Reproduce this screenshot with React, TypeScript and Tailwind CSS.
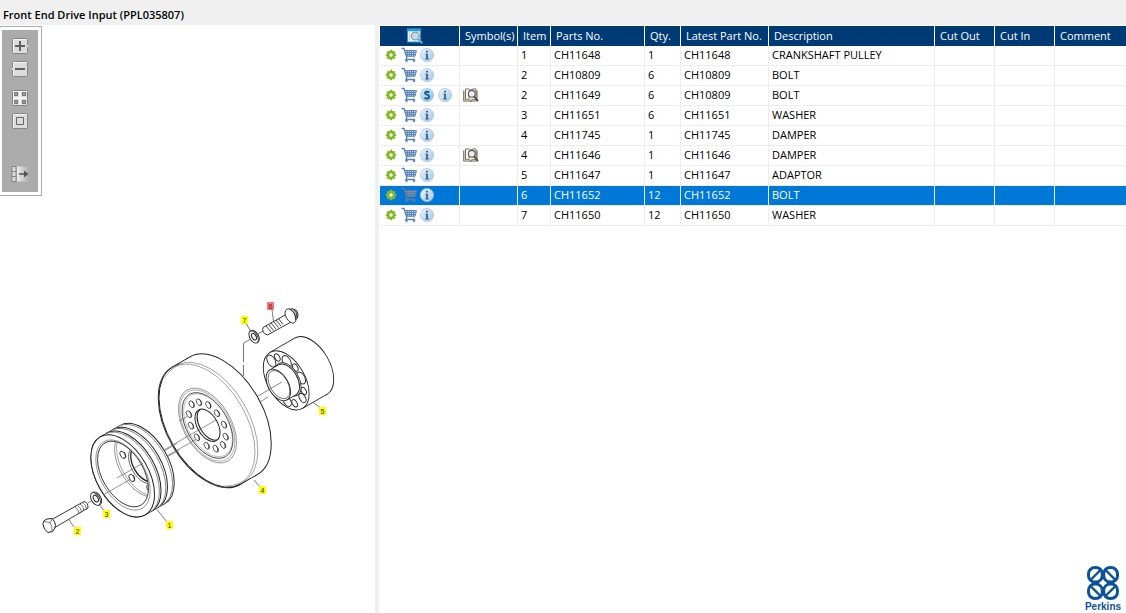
import React from "react";

type Part = {
  item: string;
  part: string;
  qty: string;
  latest: string;
  description: string;
  superseded?: boolean;
  book?: boolean;
  selected?: boolean;
};

const parts: Part[] = [
  { item: "1", part: "CH11648", qty: "1", latest: "CH11648", description: "CRANKSHAFT PULLEY" },
  { item: "2", part: "CH10809", qty: "6", latest: "CH10809", description: "BOLT" },
  { item: "2", part: "CH11649", qty: "6", latest: "CH10809", description: "BOLT", superseded: true, book: true },
  { item: "3", part: "CH11651", qty: "6", latest: "CH11651", description: "WASHER" },
  { item: "4", part: "CH11745", qty: "1", latest: "CH11745", description: "DAMPER" },
  { item: "4", part: "CH11646", qty: "1", latest: "CH11646", description: "DAMPER", book: true },
  { item: "5", part: "CH11647", qty: "1", latest: "CH11647", description: "ADAPTOR" },
  { item: "6", part: "CH11652", qty: "12", latest: "CH11652", description: "BOLT", selected: true },
  { item: "7", part: "CH11650", qty: "12", latest: "CH11650", description: "WASHER" },
];

const headings = ["Symbol(s)", "Item", "Parts No.", "Qty.", "Latest Part No.", "Description", "Cut Out", "Cut In", "Comment"];

function GearIcon() {
  return (
    <svg viewBox="0 0 12 12" className="size-3">
      <g stroke="#8abf2b" strokeWidth="2.4">
        <path d="M6 .8V11.200M.8 6H11.200M2.300 2.300l7.400 7.400M9.700 2.300L2.300 9.700" />
      </g>
      <circle cx="6" cy="6" r="3.900" fill="#80b82a" />
      <circle cx="6" cy="6" r="1.700" fill="#fff" />
    </svg>
  );
}

function CartIcon({ muted }: { muted?: boolean }) {
  const c = muted ? "#64799a" : "#5b83b3";
  return (
    <svg viewBox="0 0 16 16" className="size-4" fill="none">
      <path d="M3.500 3.500H15.500L14 9.500 5.500 10z" fill={muted ? "#6d9bd0" : "#b5cce6"} />
      <path d="M.5 1.500H3L5.800 10.500 5 12.500H14" stroke={c} strokeWidth="1.300" />
      <path d="M3.500 3.500H15.500L14 9.300H5.300M4.300 5.500H15M5 7.500H14.500M6.500 3.500V9M8.500 3.500V9M10.500 3.500V9M12.500 3.500V9" stroke={c} strokeWidth=".9" />
      <circle cx="5.500" cy="13.800" r="1.200" fill={c} />
      <circle cx="13" cy="13.800" r="1.200" fill={c} />
    </svg>
  );
}

function Badge({ kind }: { kind: "i" | "s" }) {
  return (
    <svg viewBox="0 0 14 14" className="size-3.5">
      <defs>
        <linearGradient id={"badge-" + kind} x1="0" y1="0" x2="1" y2="1">
          <stop offset="0" stopColor={kind === "i" ? "#edf4fa" : "#d4eaf6"} />
          <stop offset="1" stopColor={kind === "i" ? "#a6c8e6" : "#86c0e2"} />
        </linearGradient>
      </defs>
      <circle cx="7" cy="7" r="6.600" fill={"url(#badge-" + kind + ")"} stroke="#a3c1da" strokeWidth=".7" />
      {kind === "i" ? (
        <path d="M6 2.800h2v1.700H6zM5.300 5.800H8v4.600h.9v1H5.200v-1h.9V6.800h-.8z" fill="#3568a5" />
      ) : (
        <path d="M9.300 4.400C7.800 3.300 4.900 3.500 5 5.200 5.200 7 9.200 6.500 9.200 8.800 9.100 10.900 6.200 10.900 4.600 9.700" fill="none" stroke="#0d5c94" strokeWidth="1.900" />
      )}
    </svg>
  );
}

function BookIcon() {
  return (
    <svg viewBox="0 0 16 14" className="h-3.5 w-4" fill="none">
      <path d="M.8 2.500V13H7.500L8 13.500 8.500 13H14V2.500" stroke="#6e6b50" strokeWidth="1.200" />
      <path d="M2.500 1C5 .6 6.500 1 7.800 2 9 1 11 .6 13 1V11.500C11 11.200 9 11.500 7.800 12.500 6.500 11.500 5 11.200 2.500 11.500z" fill="#f5f5f0" stroke="#77745f" />
      <path d="M6 2v9" stroke="#8d8a78" />
      <circle cx="8.800" cy="5.800" r="3.400" fill="#ededed" stroke="#555" strokeWidth="1.100" />
      <path d="M11 8.500L15 13" stroke="#444" strokeWidth="1.700" />
    </svg>
  );
}

function PreviewIcon() {
  return (
    <svg viewBox="0 0 16 16" className="size-4" fill="none">
      <rect x=".5" y="1" width="13" height="13" fill="#eaf5fb" stroke="#2b9bd8" />
      <path d="M.5 2H13.500" stroke="#2b9bd8" strokeWidth="2.500" />
      <path d="M2.500 5v8" stroke="#7ec3e8" strokeDasharray="1 1" />
      <circle cx="8.300" cy="8" r="3.900" fill="#c3dcec" stroke="#8f9aa3" strokeWidth="1.300" />
      <path d="M11.300 11L15.500 15.300" stroke="#5aa8d8" strokeWidth="2" />
    </svg>
  );
}

function ToolFrame({ children }: { children: React.ReactNode }) {
  return (
    <svg viewBox="0 0 18 16" className="h-4 w-[18px]" fill="none">
      <rect x="1.500" y=".5" width="15" height="15" rx="1" fill="#dcdcdc" stroke="#858585" />
      <path d="M2.500 14.500V1.500H15.500" stroke="#f5f5f5" />
      {children}
    </svg>
  );
}

function Toolbar() {
  return (
    <div className="mt-px w-[42px] border border-l-0 border-[#aaa] bg-white py-[3px] pr-[3px] pl-0.5">
      <div className="flex flex-col items-center bg-[#ababab] pt-2 pb-2.5">
        <button aria-label="Zoom in" className="mb-[7px]">
          <ToolFrame>
            <path d="M16 6l2 2-2 2z" fill="#eee" stroke="#999" strokeWidth=".5" />
            <path d="M9 3v10M4 8h10" stroke="#606060" strokeWidth="2" />
          </ToolFrame>
        </button>
        <button aria-label="Zoom out" className="mb-[13px]">
          <ToolFrame>
            <path d="M2 6L0 8l2 2z" fill="#eee" stroke="#999" strokeWidth=".5" />
            <path d="M4 8h10" stroke="#606060" strokeWidth="2" />
          </ToolFrame>
        </button>
        <button aria-label="Fit page" className="mb-[7px]">
          <ToolFrame>
            <path d="M9 1v14M2 8h14" stroke="#f3f3f3" strokeWidth="2" />
            <path d="M3.500 2.500h3v3h-3zM11.500 2.500h3v3h-3zM3.500 10.500h3v3h-3zM11.500 10.500h3v3h-3z" fill="#a0a0a0" stroke="#707070" />
          </ToolFrame>
        </button>
        <button aria-label="Actual size" className="mb-[37px]">
          <ToolFrame>
            <path d="M5.500 4.500h7v7h-7z" stroke="#666" />
          </ToolFrame>
        </button>
        <button aria-label="Show list">
          <svg viewBox="0 0 18 16" className="h-4 w-[18px]" fill="none">
            <defs>
              <linearGradient id="fade">
                <stop offset="0" stopColor="#eee" />
                <stop offset="1" stopColor="#ababab" />
              </linearGradient>
            </defs>
            <path d="M6 .5h12v15H6z" fill="url(#fade)" />
            <path d="M1 .5h4v15H1zM1 5.500h4M1 10.500h4" fill="#ddd" stroke="#858585" />
            <path d="M8 8h7" stroke="#555" strokeWidth="1.600" />
            <path d="M13 4.500L17.500 8 13 11.500z" fill="#555" />
          </svg>
        </button>
      </div>
    </div>
  );
}

type DiscProps = { x: number; y: number; r: number; fill?: string; stroke?: string; w?: number };

// A circle seen along the 30 degree axis of the exploded view.
function Disc({ x, y, r, fill = "none", stroke = "#222", w = 0.8 }: DiscProps) {
  return <ellipse cx={x} cy={y} rx={r} ry={r * 0.577} transform={`rotate(60 ${x} ${y})`} fill={fill} stroke={stroke} strokeWidth={w} />;
}

// A cylinder whose near face is at (x, y) and whose far face is at (x + dx, y - dy).
function Drum({ x, y, r, dx, w = 0.9 }: { x: number; y: number; r: number; dx: number; w?: number }) {
  const dy = dx * 0.577;
  const ax = r * 0.5;
  const ay = r * 0.866;
  return (
    <g>
      <Disc x={x + dx} y={y - dy} r={r} fill="#fff" w={w} />
      <path d={`M${x - ax} ${y - ay}L${x + dx - ax} ${y - dy - ay}L${x + dx + ax} ${y - dy + ay}L${x + ax} ${y + ay}z`} fill="#fff" />
      <path
        d={`M${x - ax} ${y - ay}L${x + dx - ax} ${y - dy - ay}M${x + dx + ax} ${y - dy + ay}L${x + ax} ${y + ay}`}
        stroke="#222"
        strokeWidth={w}
      />
      <Disc x={x} y={y} r={r} fill="#fff" w={w} />
    </g>
  );
}

function Callout({ x, y, n, active }: { x: number; y: number; n: string; active?: boolean }) {
  return (
    <g>
      <rect x={x - 3} y={y - 4} width="7" height="8" fill={active ? "#f07878" : "#ffff00"} />
      <text x={x + 0.5} y={y + 2.5} textAnchor="middle" fontSize="7" fill={active ? "#7a1010" : "#333"} fontFamily="Liberation Sans, sans-serif">
        {n}
      </text>
    </g>
  );
}

const damperHoles = [
  [199, 402.3], [208.3, 405], [217, 413.3], [224, 424.7], [225.7, 436.7], [223, 445],
  [215.7, 448.7], [206.7, 445.7], [197, 437.3], [191, 425.7], [189, 414.3], [191.7, 404.3],
];

const flangeHoles = [
  [271.3, 361, 6.5], [277.3, 357.5, 4], [286.7, 361.5, 6.5], [295.3, 367.5, 4],
  [301, 378, 6.5], [303.7, 391, 4], [302.5, 398, 5], [294.7, 403.3, 4], [287, 401, 6],
];

function Diagram() {
  return (
    <svg viewBox="40 296 300 244" className="mt-[100px] ml-10 h-[244px] w-[300px]" fill="none" role="img" aria-label="Exploded view of the front end drive input">
      <defs>
        <clipPath id="bore">
          <ellipse cx="123" cy="474" rx="36" ry="20.800" transform="rotate(60 123 474)" />
        </clipPath>
        <clipPath id="hub-bore">
          <ellipse cx="207.500" cy="425.300" rx="17.500" ry="10.100" transform="rotate(60 207.500 425.300)" />
        </clipPath>
        <clipPath id="flange">
          <ellipse cx="286.200" cy="380.400" rx="32" ry="18.500" transform="rotate(60 286.200 380.400)" />
        </clipPath>
      </defs>

      {/* adaptor */}
      <Drum x={286.2} y={380.4} r={32.4} dx={24.6} />
      <g clipPath="url(#flange)">
        {flangeHoles.map(([x, y, r], i) => (
          <Disc key={i} x={x} y={y} r={r} w={0.9} />
        ))}
        <Disc x={288} y={379.4} r={18.5} fill="#fff" />
      </g>
      <Drum x={278.3} y={385} r={17.3} dx={9} />
      <Disc x={279} y={384.6} r={15.5} stroke="#444" w={0.7} />
      <path d="M258 396L282 382M260 402L268 397" stroke="#555" strokeWidth=".7" />

      {/* damper */}
      <Drum x={206.2} y={425.8} r={67.8} dx={17.1} w={1} />
      <Disc x={210.5} y={423.5} r={67} fill="#fff" stroke="#777" w={0.6} />
      <Disc x={208} y={424.8} r={66.5} fill="#fff" stroke="#777" w={0.6} />
      <ellipse cx="205.500" cy="426.200" rx="65" ry="37.500" transform="rotate(60 205.500 426.200)" fill="#fff" />
      <path d="M172.300 367.100A67.800 39.100 60 0 0 240.100 484.500" stroke="#222" />
      <Disc x={207.5} y={425.5} r={41} stroke="#777" w={0.7} />
      <Disc x={207.3} y={425.5} r={39} stroke="#888" w={0.6} />
      <Disc x={207.5} y={425.5} r={36} stroke="#333" w={0.8} />
      <Disc x={208} y={425.2} r={34.5} stroke="#888" w={0.5} />
      {damperHoles.map(([x, y], i) => (
        <g key={i}>
          <Disc x={x} y={y} r={3.8} stroke="#444" w={0.8} />
          <path d={`M${x + 0.5} ${y - 3}q2.800 3 1.500 6`} stroke="#333" strokeWidth="1" />
        </g>
      ))}
      <Disc x={207.5} y={425.3} r={17.7} w={1} />
      <g clipPath="url(#hub-bore)">
        <Disc x={209.5} y={424.2} r={17.5} w={1.1} />
      </g>
      <path d="M163 450.500L216 420M166 456.500L196 439.500M179 421L188 416" stroke="#666" strokeWidth=".7" />

      {/* pulley */}
      <Drum x={122.7} y={475.9} r={45} dx={19.7} w={1} />
      <Disc x={140.7} y={465.4} r={45} fill="#fff" stroke="#777" />
      <Disc x={135.7} y={468.4} r={45} fill="#fff" w={1} />
      <Disc x={134} y={469.4} r={45} fill="#fff" stroke="#777" />
      <Disc x={129.2} y={472.2} r={45} fill="#fff" w={1} />
      <Disc x={127.6} y={473.1} r={45} fill="#fff" stroke="#777" />
      <Disc x={122.7} y={475.9} r={45} fill="#fff" w={1} />
      <Disc x={123} y={475} r={38.5} stroke="#777" w={0.7} />
      <Disc x={123} y={474} r={36} />
      <g clipPath="url(#bore)">
        <Disc x={140} y={464} r={36} stroke="#777" w={0.7} />
        <Disc x={142} y={463} r={36} stroke="#777" w={0.6} />
        <Disc x={143} y={465} r={20.5} stroke="#555" w={0.8} />
        <Disc x={144.5} y={464} r={19.5} w={1.3} />
        <Disc x={122.7} y={454.8} r={4} />
        <Disc x={131.7} y={478} r={4} />
        <Disc x={149.5} y={488.5} r={4} />
        <path d="M124 452q3 3 1 6M133 475q3 3 1 6" stroke="#333" />
      </g>
      <path d="M117 478L143 463M103 495L130 479.500" stroke="#666" strokeWidth=".7" />
      <path d="M164 451L177 443.500M167 457L179 450" stroke="#666" strokeWidth=".7" />

      {/* bolt 2 and washer 3 */}
      <path d="M50 520.500L84 501.500Q88 502 88 508L54 528z" fill="#fff" stroke="#222" strokeWidth=".9" />
      <path d="M75 507q4 2 4 7M77.500 505.500q4 2 4 7M80 504q4 2 4 7M82.500 502.500q4 2 4 7" stroke="#444" strokeWidth=".7" />
      <path d="M42.800 523.500Q43.500 520 47 519L52 518.500Q55.500 521.500 55.500 525.500 55 529 52.500 531.500L48 532.500Q43.500 530 42.800 523.500z" fill="#fff" stroke="#222" />
      <path d="M43.500 521.500L50 522.500 52.500 519M50 522.500Q52.500 526 52 531" stroke="#444" strokeWidth=".7" />
      <path d="M88 503L92 500.500" stroke="#666" strokeWidth=".7" />
      <Disc x={96.7} y={498.3} r={7} fill="#fff" w={0.9} />
      <Disc x={95.5} y={499} r={7} fill="#fff" w={0.9} />
      <Disc x={95.8} y={498.6} r={3.7} w={1} />

      {/* bolt 6 and washer 7 */}
      <path d="M243.500 376V365M243.500 362V343L250 339.500M258 334L263 331" stroke="#555" strokeWidth=".8" />
      <Disc x={254.6} y={336.3} r={6.7} fill="#fff" w={0.9} />
      <Disc x={253.6} y={337} r={6.7} fill="#fff" w={0.9} />
      <Disc x={254} y={336.7} r={3.5} w={1} />
      <path d="M263 327.500L286 314.500 291 322 267.500 335Q261.500 333 263 327.500z" fill="#fff" stroke="#222" strokeWidth=".9" />
      <path d="M266 326l5 6M268.500 324.500l5 6M271 323l5 6M273.500 321.500l5 6M276 320l5 6M278.500 318.500l4.500 6" stroke="#333" strokeWidth=".9" />
      <path d="M288 309.500Q293 307.500 296.500 310.500 299 314 297.500 318L294 321z" fill="#ddd" stroke="#222" />
      <Disc x={290.5} y={316} r={7.8} fill="#fff" />
      <path d="M291 309.500q5 4 4.500 10.500M293.500 309q4 3.500 3.500 9" stroke="#333" strokeWidth=".9" />

      {/* leaders */}
      <path d="M74 527L69 520M105 512L99 504M167 522L157 509.500M261 488L254 480M321 408L313 402.500M272 310L273.500 321M246.500 324L250.500 331" stroke="#444" strokeWidth=".7" />
      <Callout x={77} y={531} n="2" />
      <Callout x={106} y={514} n="3" />
      <Callout x={169} y={525} n="1" />
      <Callout x={262} y={490} n="4" />
      <Callout x={322} y={411} n="5" />
      <Callout x={244} y={320} n="7" />
      <Callout x={270} y={306} n="6" active />
    </svg>
  );
}

function PerkinsLogo() {
  return (
    <div className="flex w-10 flex-col items-center gap-px text-[#0b5299]">
      <svg viewBox="0 0 32 34" className="h-[34px] w-8" fill="none" stroke="currentColor" strokeWidth="3">
        <rect x="1.500" y="1.500" width="13.800" height="14.600" rx="6.500" />
        <rect x="16.700" y="1.500" width="13.800" height="14.600" rx="6.500" />
        <rect x="1.500" y="17.900" width="13.800" height="14.600" rx="6.500" />
        <rect x="16.700" y="17.900" width="13.800" height="14.600" rx="6.500" />
        <path d="M3.500 14L13 4.500M28.500 14L19 4.500M3.500 20L13 29.500M28.500 20L19 29.500" strokeWidth="2.400" />
        <path d="M16 13.500L19.500 17 16 20.500 12.500 17z" fill="#fff" stroke="none" />
      </svg>
      <span className="font-['Liberation_Sans',sans-serif] text-[10px] leading-3 font-bold">Perkins</span>
    </div>
  );
}

const headCell = "border-r border-white pl-[5px] text-left font-normal last:border-r-0";
const cell = "h-5 border-r border-b border-[#ededed] pt-0 pr-0 pb-px pl-[3px] last:border-r-0";

export default function App() {
  return (
    <div className="flex min-h-screen flex-col bg-white font-['Open_Sans','Noto_Sans',sans-serif] text-[11px] leading-4 text-black">
      <header className="h-[25px] bg-[#f0f0f0] pt-[7px] pl-[3px]">
        <h1 className="text-[11px] leading-4 font-semibold">Front End Drive Input (PPL035807)</h1>
      </header>
      <div className="flex flex-1">
        <section className="w-[375px] shrink-0">
          <Toolbar />
          <Diagram />
        </section>
        <div className="w-1 shrink-0 bg-[#f0f0f0]" />
        <main className="flex min-w-0 flex-1 flex-col justify-between pt-px pl-px">
          <table className="w-full table-fixed border-separate border-spacing-0">
            <colgroup>
              <col className="w-20" />
              <col className="w-[58px]" />
              <col className="w-[33px]" />
              <col className="w-[94px]" />
              <col className="w-9" />
              <col className="w-[88px]" />
              <col className="w-[166px]" />
              <col className="w-[60px]" />
              <col className="w-[60px]" />
              <col />
            </colgroup>
            <thead>
              <tr className="h-5 bg-[#003a75] whitespace-nowrap text-white">
                <th className="border-r border-white py-0 pr-0 pl-[27px]">
                  <button aria-label="Preview parts" className="block w-4">
                    <PreviewIcon />
                  </button>
                </th>
                {headings.map((h) => (
                  <th key={h} className={headCell}>{h}</th>
                ))}
              </tr>
            </thead>
            <tbody>
              {parts.map((p, i) => (
                <tr key={i} className={p.selected ? "bg-[#0078d7] text-white" : "bg-white"}>
                  <td className="h-5 border-r border-b border-[#ededed] pt-0 pr-0 pb-px pl-[5px]">
                    <div className="flex items-center">
                      <button aria-label="Settings" className="mr-1"><GearIcon /></button>
                      <button aria-label="Add to cart" className="mr-[3px]"><CartIcon muted={p.selected} /></button>
                      {p.superseded && <button aria-label="Superseded" className="mr-1"><Badge kind="s" /></button>}
                      <button aria-label="Information"><Badge kind="i" /></button>
                    </div>
                  </td>
                  <td className={cell}>{p.book && <BookIcon />}</td>
                  <td className={cell}>{p.item}</td>
                  <td className={cell}>{p.part}</td>
                  <td className={cell}>{p.qty}</td>
                  <td className={cell}>{p.latest}</td>
                  <td className={cell}>{p.description}</td>
                  <td className={cell} />
                  <td className={cell} />
                  <td className={cell} />
                </tr>
              ))}
            </tbody>
          </table>
          <div className="mr-[3px] self-end">
            <PerkinsLogo />
          </div>
        </main>
      </div>
    </div>
  );
}
